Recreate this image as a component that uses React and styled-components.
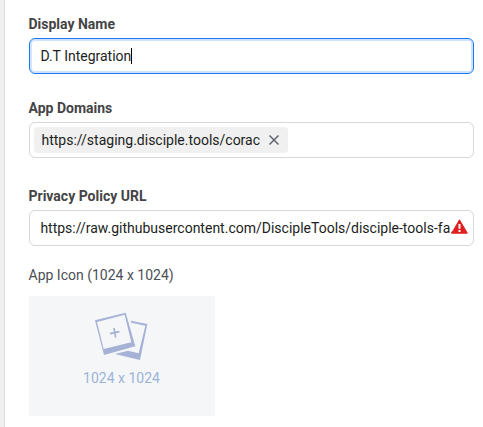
import React from "react";
import styled, { createGlobalStyle } from "styled-components";

const GlobalStyle = createGlobalStyle`
  *, *::before, *::after { box-sizing: border-box; }
  body { margin: 0; background: #f0f0f0; overflow: hidden; }
`;

const Page = styled.main`
  height: 427px;
  padding-left: 4px;
  font-family: Roboto, "Liberation Sans", sans-serif;
  font-size: 14px;
  line-height: 20px;
  color: #1c1e21;
`;

const Panel = styled.form`
  display: flex;
  flex-direction: column;
  height: 100%;
  padding: 14px 9px 0 24px;
  border-left: 1px solid #dadde1;
  background: #fff;
`;

const Field = styled.div`
  display: flex;
  flex-direction: column;
  margin-bottom: ${({ $gap }) => $gap}px;
`;

const Label = styled.span`
  height: 20px;
  margin-bottom: ${({ $gap = 4 }) => $gap}px;
  margin-left: -0.5px;
  font-weight: ${({ $strong }) => ($strong ? 700 : 400)};
  color: ${({ $strong }) => ($strong ? "#444445" : "#4b4f56")};
  white-space: nowrap;
`;

const InputBox = styled.div`
  display: flex;
  align-items: center;
  height: 36px;
  padding: 0 5px 0 ${({ $tokens }) => ($tokens ? 4 : 10.4)}px;
  border: 1px solid ${({ $focused }) => ($focused ? "#1877f2" : "#d6d7d9")};
  border-radius: 6px;
  background: #fff;
  box-shadow: ${({ $focused }) => ($focused ? "inset 0 0 0 2px #d0e3fc" : "none")};
`;

const Value = styled.span`
  white-space: nowrap;
`;

const UrlValue = styled(Value)`
  flex: 0 0 414px;
`;

const Caret = styled.span`
  width: 1px;
  height: 16px;
  margin-left: -0.4px;
  background: #000;
`;

const Token = styled.span`
  display: flex;
  align-items: center;
  gap: 8px;
  height: 26px;
  padding: 0 7.5px;
  border-radius: 4px;
  background: #f0f0f0;
`;

const Icon = styled.svg`
  display: block;
  flex: none;
`;

const AlertIcon = styled(Icon)`
  margin: 0 0 3px -3.4px;
`;

const Dropzone = styled.div`
  display: flex;
  flex-direction: column;
  align-items: center;
  width: 186px;
  height: 120px;
  padding: 15px 1px 0 0;
  background: #f5f6f8;
  color: #9cb4d8;
`;

const SizeHint = styled.span`
  margin-top: 7px;
`;

function CloseIcon() {
  return (
    <Icon width="12" height="12" viewBox="0 0 12 12">
      <path d="M1.5 1.5 10.5 10.5M10.5 1.5 1.5 10.5" stroke="#606770" strokeWidth="1.5" fill="none" />
    </Icon>
  );
}

function WarningIcon() {
  return (
    <AlertIcon width="17" height="15" viewBox="0 0 17 15">
      <path d="M8.5 .8 16.3 14.2H.7Z" fill="#e02020" stroke="#e02020" strokeWidth="1" strokeLinejoin="round" />
      <path d="M7.5 5h2v4.7h-2zM7.5 11h2v2h-2z" fill="#fff" />
    </AlertIcon>
  );
}

function PhotosIcon() {
  return (
    <Icon width="55" height="50" viewBox="57 33 165 150" fill="#a5b2d5">
      <path fillRule="evenodd" d="M60 61 152 38 181 139 87 165ZM66 66 86 147 169 127 149 44Z" />
      <path d="M167 62 217 72 195 180 120 162 159 152 191 160 211 77 169 68Z" />
      <path d="M105 101 133 95M117 84 122 113" fill="none" stroke="#a5b2d5" strokeWidth="5" />
    </Icon>
  );
}

export default function App() {
  return (
    <>
      <GlobalStyle />
      <Page>
        <Panel>
          <Field $gap={24}>
            <Label $strong>Display Name</Label>
            <InputBox $focused>
              <Value>D.T Integration</Value>
              <Caret />
            </InputBox>
          </Field>
          <Field $gap={28}>
            <Label $strong>App Domains</Label>
            <InputBox $tokens>
              <Token>
                <Value>https://staging.disciple.tools/corac</Value>
                <CloseIcon />
              </Token>
            </InputBox>
          </Field>
          <Field $gap={19}>
            <Label $strong>Privacy Policy URL</Label>
            <InputBox>
              <UrlValue>https://raw.githubusercontent.com/DiscipleTools/disciple-tools-fa.</UrlValue>
              <WarningIcon />
            </InputBox>
          </Field>
          <Field $gap={0}>
            <Label $gap={11}>App Icon (1024 x 1024)</Label>
            <Dropzone>
              <PhotosIcon />
              <SizeHint>1024 x 1024</SizeHint>
            </Dropzone>
          </Field>
        </Panel>
      </Page>
    </>
  );
}
